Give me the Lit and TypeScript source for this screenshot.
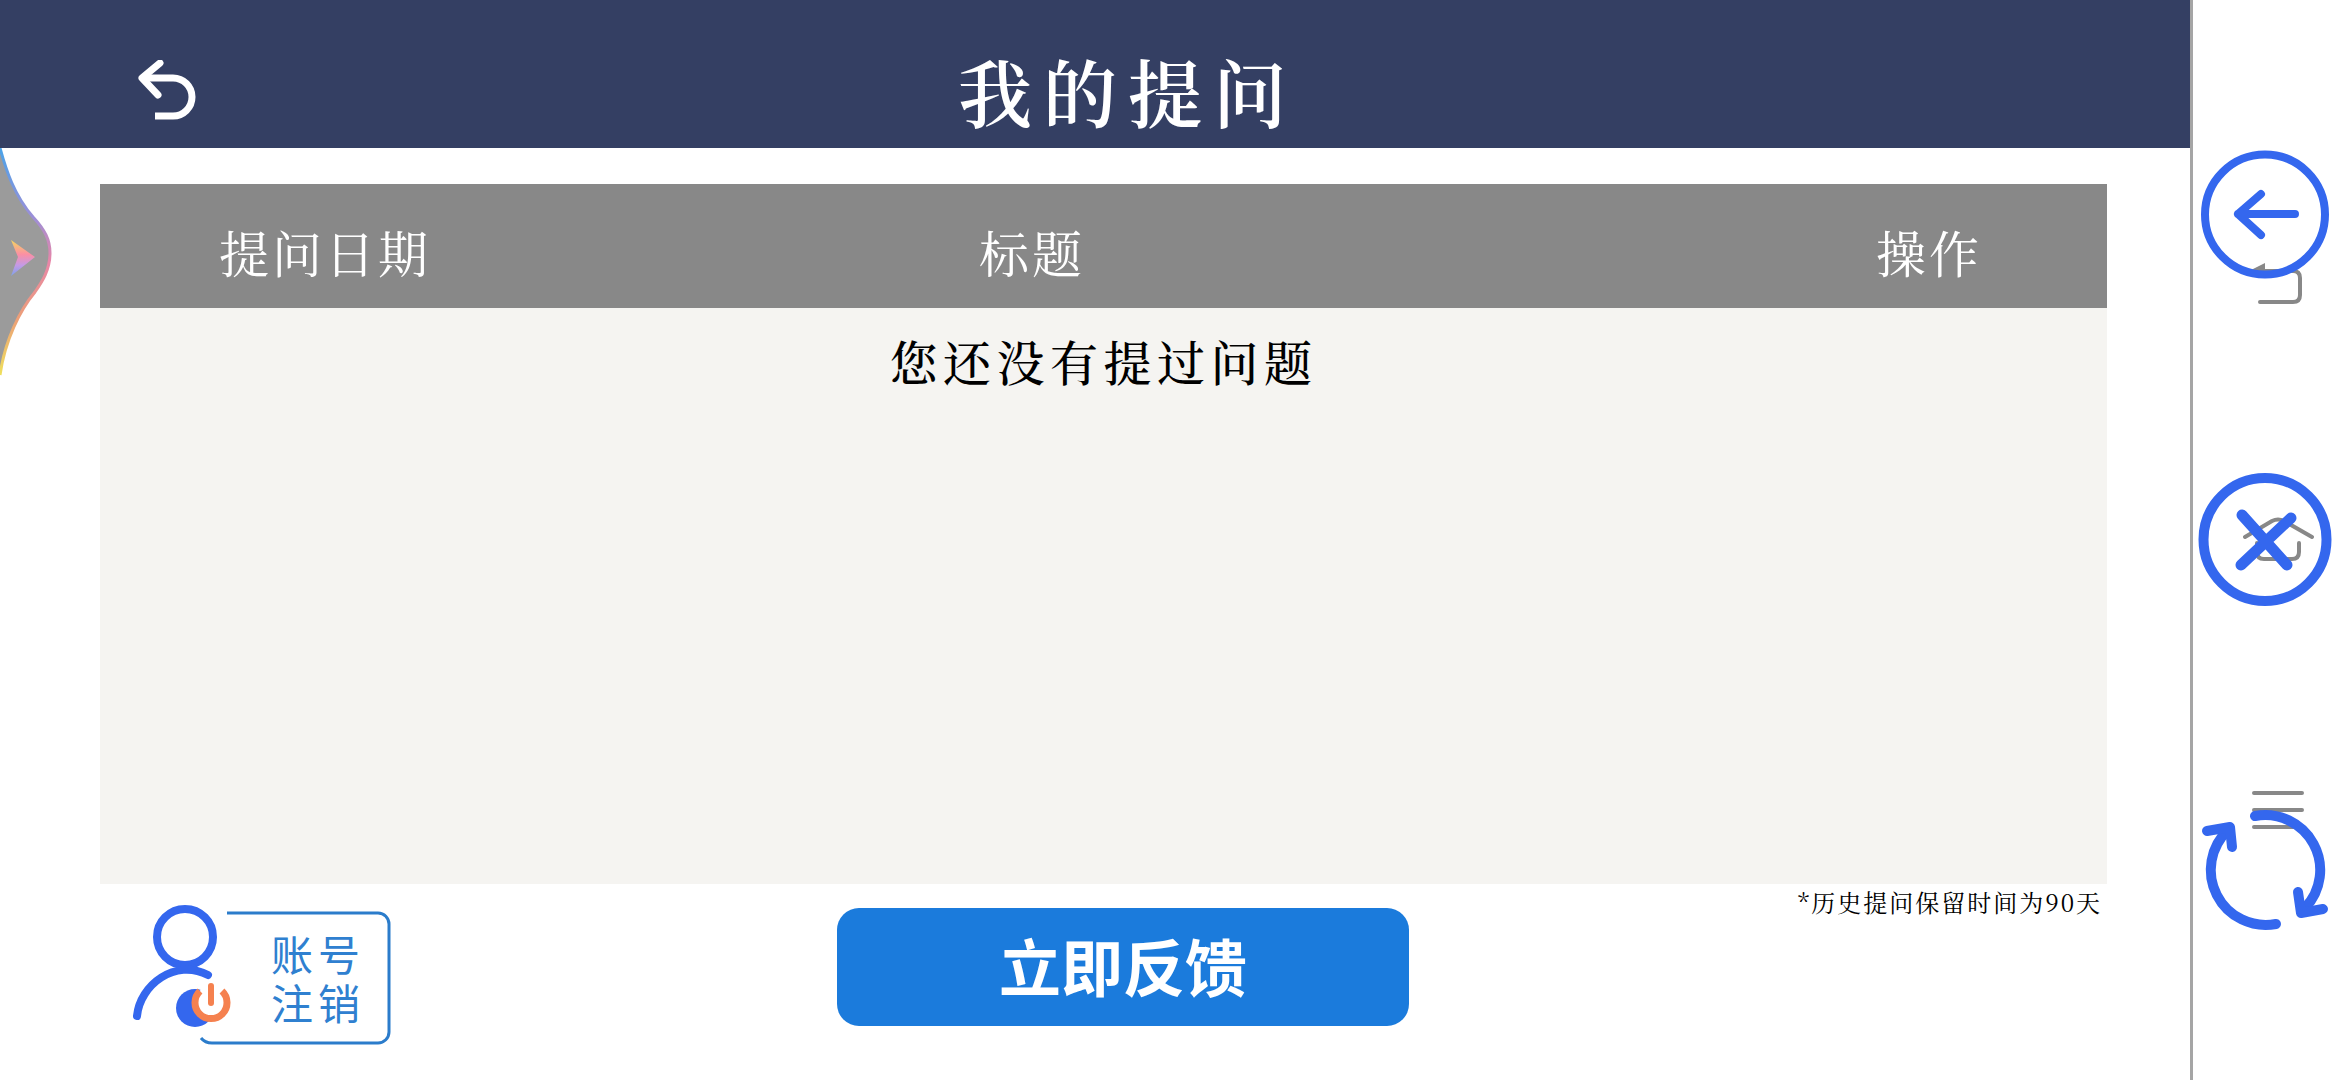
import { LitElement, html, css } from "lit";
import { customElement } from "lit/decorators.js";

@customElement("app-root")
export class AppRoot extends LitElement {
  static styles = css`
    :host { display: block; width: 2340px; height: 1080px; position: relative; overflow: hidden; background: #fff;
      font-family: "Noto Serif CJK SC", "Liberation Serif", "Noto Sans CJK SC", serif; }
    .frame { display: flex; height: 1080px; }
    .main { width: 2190px; display: flex; flex-direction: column; }
    .topbar { height: 148px; background: #343f63; display: flex; align-items: center; padding-left: 137px; gap: 759px; color: #fff; flex: none; }
    .back { width: 62px; height: 62px; margin-top: 34px; flex: none; }
    .title { font-size: 74px; letter-spacing: 11px; line-height: 1; padding-top: 31px; white-space: nowrap; font-weight: 600; }
    .table { margin: 36px 0 0 100px; width: 2007px; height: 700px; background: #f5f4f1; display: flex; flex-direction: column; flex: none; }
    .thead { height: 124px; background: #888; color: #fff; display: grid; grid-template-columns: 450px 964px 1fr 356px; align-items: center; font-size: 50px; letter-spacing: 3px; text-align: center; flex: none; }
    .thead span { padding-top: 10px; }
    .empty { text-align: center; font-size: 48px; letter-spacing: 5.5px; color: #000; line-height: 1; padding-top: 29px; font-weight: 500; }
    .footer { display: grid; grid-template-columns: 737px 572px 1fr; padding-left: 100px; width: 2007px; box-sizing: content-box; }
    .logout { position: relative; width: 300px; height: 196px; }
    .logout svg { position: absolute; left: 0; top: 0; }
    .logout-text { position: absolute; left: 171px; top: 44px; color: #2f80d0; font-family: "Noto Sans CJK SC", sans-serif; font-weight: 400; font-size: 42px; line-height: 49px; letter-spacing: 5px; }
    .submit { margin-top: 24px; height: 118px; box-sizing: border-box; padding-bottom: 4px; border-radius: 22px; background: #1b7bdc; color: #fff; display: flex; align-items: center; justify-content: center; font-family: "Noto Sans CJK SC", sans-serif; font-weight: 700; font-size: 62px; }
    .note { text-align: right; font-size: 24px; letter-spacing: 2px; color: #000; line-height: 1; padding-top: 6px; white-space: nowrap; padding-right: 5px; }
    .nav { flex: 1; border-left: 3px solid #a5a5a5; display: grid; grid-template-rows: 260px 270px 1fr; padding: 250px 0 0 47px; }
    .nav svg { display: block; width: 76px; height: 60px; }
    .edge { position: absolute; left: 0; top: 148px; }
    .float { position: absolute; left: 2193px; top: 0; }
  `;

  render() {
    return html`
      <div class="frame">
        <div class="main">
          <div class="topbar">
            <svg class="back" viewBox="137 60 62 62" fill="none" stroke="#fff" stroke-width="7">
              <path d="M160 63 L142 78 L158 95" stroke-linecap="round" stroke-linejoin="round" />
              <path d="M142 78 H173 A19 19 0 0 1 173 116 H155" />
            </svg>
            <div class="title">我的提问</div>
          </div>
          <div class="table">
            <div class="thead"><span>提问日期</span><span>标题</span><span></span><span>操作</span></div>
            <div class="empty">您还没有提过问题</div>
          </div>
          <div class="footer">
            <div class="logout">
              <svg width="300" height="196" viewBox="100 884 300 196" fill="none">
                <path d="M227 913 H378 A11 11 0 0 1 389 924 V1032 A11 11 0 0 1 378 1043 H212 Q205 1043 201 1038" stroke="#2b7ccb" stroke-width="3" />
                <circle cx="185" cy="937" r="28" stroke="#3467ee" stroke-width="8" />
                <path d="M137 1016 C140 985 175 958 208 975" stroke="#3467ee" stroke-width="8" stroke-linecap="round" />
                <circle cx="195" cy="1008" r="19" fill="#3467ee" />
                <circle cx="211" cy="1002" r="16" fill="#fff" />
                <path d="M200 991 A16 16 0 1 0 222 991" stroke="#f5814f" stroke-width="7" />
                <path d="M211 986 V1003" stroke="#f5814f" stroke-width="6" stroke-linecap="round" />
              </svg>
              <div class="logout-text">账号<br />注销</div>
            </div>
            <div class="submit">立即反馈</div>
            <div class="note">*历史提问保留时间为90天</div>
          </div>
        </div>
        <div class="nav">
          <svg viewBox="2240 250 76 60" fill="none" stroke="#888" stroke-width="4" stroke-linecap="round">
            <path d="M2260 302 H2293 Q2300 302 2300 295 V278 Q2300 271 2293 271 H2262" />
            <path d="M2251 270 L2265 263 V275 Z" fill="#888" stroke="none" />
          </svg>
          <svg viewBox="2240 510 76 60" fill="none" stroke="#888" stroke-width="4" stroke-linecap="round" stroke-linejoin="round">
            <path d="M2245 537 L2272 521 Q2278 518 2284 521 L2312 537" />
            <path d="M2257 543 V552 Q2257 559 2264 559 H2292 Q2299 559 2299 552 V543" />
          </svg>
          <svg viewBox="2240 780 76 60" fill="none" stroke="#888" stroke-width="4" stroke-linecap="round">
            <path d="M2254 793 H2302 M2254 810 H2302 M2254 827 H2302" />
          </svg>
        </div>
      </div>

      <svg class="edge" width="60" height="232" viewBox="0 148 60 232" fill="none">
        <defs>
          <linearGradient id="rim" x1="0" y1="0" x2="0" y2="1">
            <stop offset="0" stop-color="#4aa3e8" />
            <stop offset="0.3" stop-color="#9a8fd8" />
            <stop offset="0.5" stop-color="#e886a8" />
            <stop offset="0.75" stop-color="#ec9f78" />
            <stop offset="1" stop-color="#efe05c" />
          </linearGradient>
          <linearGradient id="chev" x1="0" y1="0" x2="0" y2="1">
            <stop offset="0" stop-color="#f4d75e" />
            <stop offset="0.4" stop-color="#fb8fa4" />
            <stop offset="0.7" stop-color="#c49ae6" />
            <stop offset="1" stop-color="#7ea2e8" />
          </linearGradient>
        </defs>
        <path d="M0 148 C6 170 14 195 33 217 C45 230 50 240 50 253 C50 270 42 282 35 292 C20 310 5 340 0 375 Z" fill="#9b9b9b" />
        <path d="M0 148 C6 170 14 195 33 217 C45 230 50 240 50 253 C50 270 42 282 35 292 C20 310 5 340 0 375" stroke="url(#rim)" stroke-width="3" />
        <path d="M11 240 L35 257 L11 276 L18 257 Z" fill="url(#chev)" />
      </svg>

      <svg class="float" width="147" height="1080" viewBox="2193 0 147 1080" fill="none" stroke="#3467ee" stroke-linecap="round" stroke-linejoin="round">
        <circle cx="2265" cy="214.5" r="60" stroke-width="8" />
        <path d="M2295 214 H2238 M2261 194 L2238 214 L2261 235" stroke-width="8" />
        <circle cx="2265" cy="539.5" r="61.5" stroke-width="10" />
        <path d="M2242 515 L2287 565 M2291 518 L2241 565" stroke-width="11" />
        <path d="M2255 816 A55 55 0 0 1 2305 908" stroke-width="10" />
        <path d="M2276 924 A55 55 0 0 1 2228 830" stroke-width="10" />
        <path d="M2207 831 L2230 827 L2232 847" stroke-width="10" />
        <path d="M2298 892 L2301 913 L2323 909" stroke-width="10" />
      </svg>
    `;
  }
}
